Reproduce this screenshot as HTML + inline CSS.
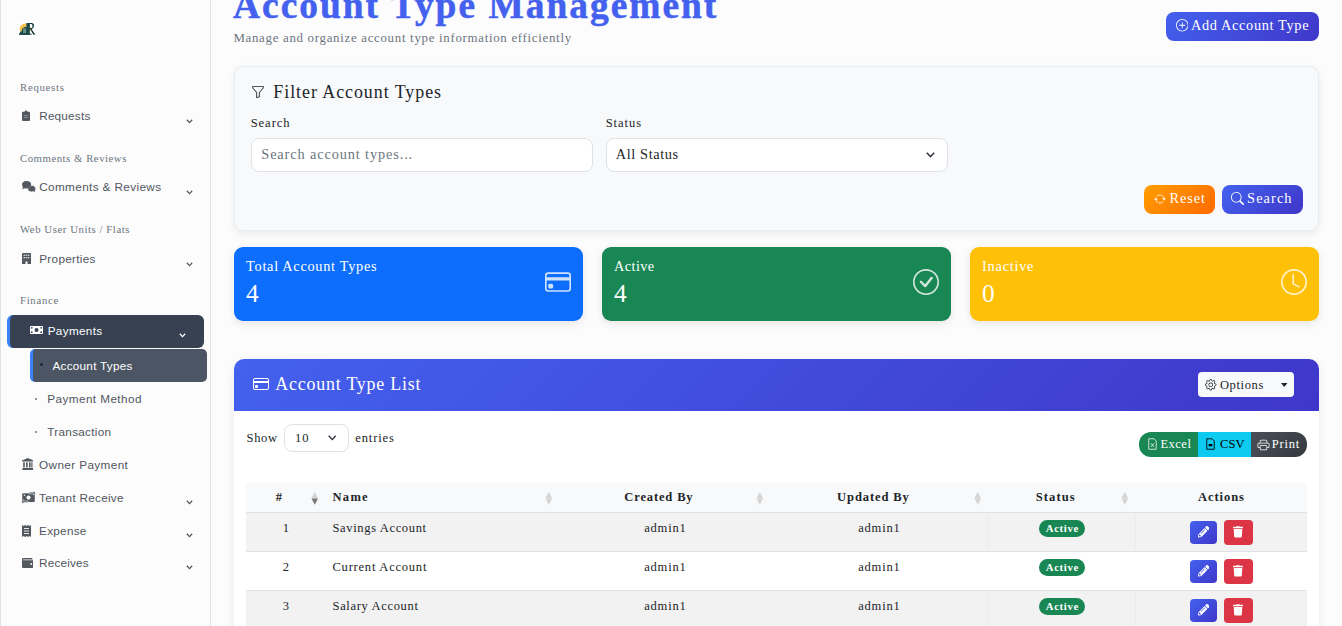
<!DOCTYPE html>
<html><head><meta charset="utf-8"><title>Account Type Management</title>
<style>
html,body{margin:0;padding:0;}
body{width:1342px;height:626px;overflow:hidden;position:relative;background:#fcfcfd;font-family:"Liberation Serif",serif;}
.b{position:absolute;display:block;}
.t{position:absolute;white-space:nowrap;}
</style></head><body>
<div class="b" style="left:0px;top:0px;width:211px;height:626px;background:#fcfcfd;border-left:1px solid #dee2e6;border-right:1px solid #dee2e6;box-sizing:border-box;"></div>
<div class="b" style="left:18px;top:21px;width:18px;height:16px;background:#fff;"></div>
<svg class="b" style="left:18px;top:21px;" width="18" height="16" viewBox="18 21 18 16"><circle cx="25.2" cy="29.2" r="5.6" fill="#f6c350"/><path d="M19 34.8 L20.3 31.8 L21.6 31.2 L22.3 28.6 L24.6 27.1 L26.4 27.1 L26.4 22.9 L29.8 22.9 L29.8 34.8 Z" fill="#1d4a4c"/><rect x="23.1" y="28.4" width="2.9" height="4.6" fill="#6f8f86"/><path d="M29.5 22.9 L31.6 22.9 Q34 23 34 25.8 Q34 28.3 31.6 28.9 L35.3 34.8 L33.4 34.8 L30.2 29.3 L29.5 29.3 Z M29.8 24.1 L29.8 28 L31.3 28 Q32.5 27.8 32.5 25.9 Q32.4 24.2 31.3 24.1 Z" fill="#14393a"/><rect x="19" y="33.6" width="12.5" height="1.2" fill="#1d4a4c"/></svg>
<div class="t" style="top:80px;font:400 10.75px/14px 'Liberation Serif', serif;letter-spacing:0.726px;color:#6c757d;left:20.0px;">Requests</div>
<div class="t" style="top:151px;font:400 10.75px/14px 'Liberation Serif', serif;letter-spacing:0.528px;color:#6c757d;left:20.0px;">Comments &amp; Reviews</div>
<div class="t" style="top:222px;font:400 10.75px/14px 'Liberation Serif', serif;letter-spacing:0.561px;color:#6c757d;left:20.0px;">Web User Units / Flats</div>
<div class="t" style="top:293px;font:400 10.75px/14px 'Liberation Serif', serif;letter-spacing:0.693px;color:#6c757d;left:20.0px;">Finance</div>
<div class="t" style="top:108px;font:400 11.76px/15px 'Liberation Sans', sans-serif;letter-spacing:0.207px;color:#51565d;left:39.2px;">Requests</div>
<svg class="b" style="left:185.5px;top:118.60000000000001px;" width="7" height="5" viewBox="0 0 7 5"><path d="M0.8 0.8 L3.5 3.6 L6.2 0.8" fill="none" stroke="#53585e" stroke-width="1.3"/></svg>
<div class="t" style="top:179px;font:400 11.76px/15px 'Liberation Sans', sans-serif;letter-spacing:0.372px;color:#51565d;left:39.2px;">Comments &amp; Reviews</div>
<svg class="b" style="left:185.5px;top:189.5px;" width="7" height="5" viewBox="0 0 7 5"><path d="M0.8 0.8 L3.5 3.6 L6.2 0.8" fill="none" stroke="#53585e" stroke-width="1.3"/></svg>
<div class="t" style="top:251px;font:400 11.76px/15px 'Liberation Sans', sans-serif;letter-spacing:0.301px;color:#51565d;left:39.2px;">Properties</div>
<svg class="b" style="left:185.5px;top:261.59999999999997px;" width="7" height="5" viewBox="0 0 7 5"><path d="M0.8 0.8 L3.5 3.6 L6.2 0.8" fill="none" stroke="#53585e" stroke-width="1.3"/></svg>
<svg class="b" style="left:22px;top:110px;" width="8" height="11" viewBox="0 0 8 11"><path d="M1 1.8 H2.6 A1.4 1.4 0 0 1 5.4 1.8 H7 A1 1 0 0 1 8 2.8 V10 A1 1 0 0 1 7 11 H1 A1 1 0 0 1 0 10 V2.8 A1 1 0 0 1 1 1.8Z" fill="#53585e"/><rect x="1.8" y="5" width="4.4" height="0.8" fill="#9aa1ab"/><rect x="1.8" y="7" width="4.4" height="0.8" fill="#9aa1ab"/></svg>
<svg class="b" style="left:18px;top:176px;" width="22" height="20" viewBox="18 176 22 20"><path d="M31.8 185.2 A4.5 3.6 0 0 1 35.8 188.6 A4.5 3.6 0 0 1 35.1 190.6 L36 192.6 L33.3 191.7 A4.5 3.6 0 0 1 27.4 188.9 Z" fill="#53585e" stroke="#fcfcfd" stroke-width="0.8"/><ellipse cx="26.6" cy="184.7" rx="4.5" ry="3.7" fill="#53585e"/><path d="M23.3 186.8 L22 189.3 L25.4 188.1Z" fill="#53585e"/></svg>
<svg class="b" style="left:21.5px;top:253px;" width="9" height="11" viewBox="0 0 9 11"><path d="M0 0.8 A0.8 0.8 0 0 1 0.8 0 H8.2 A0.8 0.8 0 0 1 9 0.8 V11 H5.5 V8.5 H3.5 V11 H0Z" fill="#53585e"/><rect x="1.5" y="1.6" width="1.6" height="1.3" fill="#d1d5db"/><rect x="3.7" y="1.6" width="1.6" height="1.3" fill="#d1d5db"/><rect x="5.9" y="1.6" width="1.6" height="1.3" fill="#d1d5db"/><rect x="1.5" y="4" width="1.6" height="1.3" fill="#d1d5db"/><rect x="3.7" y="4" width="1.6" height="1.3" fill="#d1d5db"/><rect x="5.9" y="4" width="1.6" height="1.3" fill="#d1d5db"/></svg>
<div class="b" style="left:7px;top:315px;width:197px;height:32.5px;background:#374151;border-left:3px solid #3b82f6;border-radius:6px;box-sizing:border-box;"></div>
<svg class="b" style="left:30px;top:326px;" width="13" height="8" viewBox="0 0 13 8"><rect x="0" y="0" width="13" height="8" rx="0.8" fill="#fff"/><circle cx="6.5" cy="4" r="2" fill="#374151"/><circle cx="1.8" cy="1.8" r="0.9" fill="#374151"/><circle cx="11.2" cy="6.2" r="0.9" fill="#374151"/><circle cx="11.2" cy="1.8" r="0.9" fill="#374151"/><circle cx="1.8" cy="6.2" r="0.9" fill="#374151"/></svg>
<div class="t" style="top:323px;font:400 11.76px/15px 'Liberation Sans', sans-serif;letter-spacing:0.323px;color:#ffffff;left:47.7px;">Payments</div>
<svg class="b" style="left:178.5px;top:333.3px;" width="7" height="5" viewBox="0 0 7 5"><path d="M0.8 0.8 L3.5 3.6 L6.2 0.8" fill="none" stroke="#ffffff" stroke-width="1.3"/></svg>
<div class="b" style="left:30px;top:349.2px;width:177px;height:32.5px;background:#4b5563;border-left:3px solid #3b82f6;border-radius:5px;box-sizing:border-box;"></div>
<div class="b" style="left:40px;top:363px;width:3px;height:3px;background:#1f2937;border-radius:50%;"></div>
<div class="t" style="top:358px;font:400 11.76px/15px 'Liberation Sans', sans-serif;letter-spacing:0.263px;color:#ffffff;left:52.4px;">Account Types</div>
<div class="b" style="left:35px;top:397.8px;width:2px;height:2px;background:#6b7280;border-radius:50%;"></div>
<div class="t" style="top:391px;font:400 11.76px/15px 'Liberation Sans', sans-serif;letter-spacing:0.408px;color:#51565d;left:47.3px;">Payment Method</div>
<div class="b" style="left:35px;top:430.6px;width:2px;height:2px;background:#6b7280;border-radius:50%;"></div>
<div class="t" style="top:424px;font:400 11.76px/15px 'Liberation Sans', sans-serif;letter-spacing:0.279px;color:#51565d;left:47.3px;">Transaction</div>
<div class="t" style="top:457px;font:400 11.76px/15px 'Liberation Sans', sans-serif;letter-spacing:0.373px;color:#51565d;left:39.1px;">Owner Payment</div>
<div class="t" style="top:490px;font:400 11.76px/15px 'Liberation Sans', sans-serif;letter-spacing:0.26px;color:#51565d;left:39.1px;">Tenant Receive</div>
<svg class="b" style="left:185.5px;top:500px;" width="7" height="5" viewBox="0 0 7 5"><path d="M0.8 0.8 L3.5 3.6 L6.2 0.8" fill="none" stroke="#53585e" stroke-width="1.3"/></svg>
<div class="t" style="top:523px;font:400 11.76px/15px 'Liberation Sans', sans-serif;letter-spacing:0.253px;color:#51565d;left:39.1px;">Expense</div>
<svg class="b" style="left:185.5px;top:533.1px;" width="7" height="5" viewBox="0 0 7 5"><path d="M0.8 0.8 L3.5 3.6 L6.2 0.8" fill="none" stroke="#53585e" stroke-width="1.3"/></svg>
<div class="t" style="top:555px;font:400 11.76px/15px 'Liberation Sans', sans-serif;letter-spacing:0.165px;color:#51565d;left:39.1px;">Receives</div>
<svg class="b" style="left:185.5px;top:565.1px;" width="7" height="5" viewBox="0 0 7 5"><path d="M0.8 0.8 L3.5 3.6 L6.2 0.8" fill="none" stroke="#53585e" stroke-width="1.3"/></svg>
<svg class="b" style="left:21.8px;top:458px;" width="11.5" height="12" viewBox="0 0 11.5 12"><path d="M5.75 0 L11.5 2.6 V3.6 H0 V2.6Z" fill="#53585e"/><rect x="1.2" y="4.3" width="1.6" height="5.2" fill="#53585e"/><rect x="4.1" y="4.3" width="1.6" height="5.2" fill="#53585e"/><rect x="7" y="4.3" width="1.6" height="5.2" fill="#53585e"/><rect x="9.3" y="4.3" width="1.2" height="5.2" fill="#53585e"/><rect x="0.4" y="10" width="10.7" height="2" fill="#53585e"/></svg>
<svg class="b" style="left:18px;top:488px;" width="22" height="20" viewBox="18 488 22 20"><rect x="22.2" y="493.3" width="12.6" height="8.6" rx="1.2" fill="#53585e"/><circle cx="28.5" cy="497.6" r="2.1" fill="#fcfcfd"/><circle cx="24.4" cy="495.3" r="0.7" fill="#fcfcfd"/><path d="M29 492.2 H33.5 V490.8 L35.6 493 L33.5 495.2 V493.8 H29Z" fill="#53585e" stroke="#fcfcfd" stroke-width="0.5"/><path d="M28 501 H23.6 V499.6 L21.5 501.8 L23.6 504 V502.6 H28Z" fill="#53585e" stroke="#fcfcfd" stroke-width="0.5"/></svg>
<svg class="b" style="left:21.5px;top:525px;" width="9" height="12" viewBox="0 0 9 12"><path d="M0 0 L1.5 1 L3 0 L4.5 1 L6 0 L7.5 1 L9 0 V12 L7.5 11 L6 12 L4.5 11 L3 12 L1.5 11 L0 12Z" fill="#53585e"/><rect x="2" y="3" width="5" height="1" fill="#e5e7eb"/><rect x="2" y="5.5" width="5" height="1" fill="#e5e7eb"/><rect x="2" y="8" width="5" height="1" fill="#e5e7eb"/></svg>
<svg class="b" style="left:21.5px;top:557.5px;" width="11.5" height="10" viewBox="0 0 11.5 10"><path d="M1.2 0 H9.5 A1 1 0 0 1 10.5 1 V1.5 H1.2 A0.6 0.6 0 0 0 1.2 2.2 H10.5 A1 1 0 0 1 11.5 3.2 V8.8 A1.2 1.2 0 0 1 10.3 10 H1.2 A1.2 1.2 0 0 1 0 8.8 V1.2 A1.2 1.2 0 0 1 1.2 0Z" fill="#53585e"/><circle cx="9.2" cy="6" r="0.9" fill="#fcfcfc"/></svg>
<div class="t" style="top:-19px;font:700 37.44px/49px 'Liberation Serif', serif;letter-spacing:1.999px;color:#4361ee;left:233.0px;-webkit-text-stroke:0.5px #4361ee;">Account Type Management</div>
<div class="t" style="top:30px;font:400 12.88px/17px 'Liberation Serif', serif;letter-spacing:0.702px;color:#6c757d;left:233.4px;">Manage and organize account type information efficiently</div>
<div class="b" style="left:1166px;top:12px;width:153px;height:29px;background:linear-gradient(135deg,#4361ee,#3f37c9);border-radius:8px;"></div>
<svg class="b" style="left:1175.5px;top:19.3px;" width="12.5" height="12.5" viewBox="0 0 16 16"><path fill="#fff" d="M8 15A7 7 0 1 1 8 1a7 7 0 0 1 0 14m0 1A8 8 0 1 0 8 0a8 8 0 0 0 0 16"/><path fill="#fff" d="M8 4a.5.5 0 0 1 .5.5v3h3a.5.5 0 0 1 0 1h-3v3a.5.5 0 0 1-1 0v-3h-3a.5.5 0 0 1 0-1h3v-3A.5.5 0 0 1 8 4"/></svg>
<div class="t" style="top:16px;font:400 14.34px/19px 'Liberation Serif', serif;letter-spacing:0.648px;color:#ffffff;left:1191.0px;">Add Account Type</div>
<div class="b" style="left:234px;top:66px;width:1085px;height:164.5px;background:#f8f9fa;border:1px solid #e9ecef;border-radius:9px;box-sizing:border-box;box-shadow:0 3px 8px rgba(0,0,0,.07);"></div>
<svg class="b" style="left:251px;top:84.5px;" width="14" height="14" viewBox="0 0 16 16"><path fill="#212529" d="M1.5 1.5A.5.5 0 0 1 2 1h12a.5.5 0 0 1 .5.5v2a.5.5 0 0 1-.128.334L10 8.692V13.5a.5.5 0 0 1-.342.474l-3 1A.5.5 0 0 1 6 14.5V8.692L1.628 3.834A.5.5 0 0 1 1.5 3.5zm1 .5v1.308l4.372 4.858A.5.5 0 0 1 7 8.5v5.306l2-.666V8.5a.5.5 0 0 1 .128-.334L13.5 3.308V2z"/></svg>
<div class="t" style="top:81px;font:400 17.92px/23px 'Liberation Serif', serif;letter-spacing:0.956px;color:#212529;left:273.3px;">Filter Account Types</div>
<div class="t" style="top:115px;font:400 12.54px/16px 'Liberation Serif', serif;letter-spacing:0.95px;color:#212529;left:250.7px;">Search</div>
<div class="t" style="top:115px;font:400 12.54px/16px 'Liberation Serif', serif;letter-spacing:0.942px;color:#212529;left:605.7px;">Status</div>
<div class="b" style="left:251px;top:138px;width:342px;height:33.5px;background:#fff;border:1px solid #dee2e6;border-radius:8px;box-sizing:border-box;"></div>
<div class="t" style="top:145px;font:400 14.34px/19px 'Liberation Serif', serif;letter-spacing:0.872px;color:#6c757d;left:261.3px;">Search account types...</div>
<div class="b" style="left:606px;top:138px;width:342px;height:33.5px;background:#fff;border:1px solid #dee2e6;border-radius:8px;box-sizing:border-box;"></div>
<div class="t" style="top:145px;font:400 14.34px/19px 'Liberation Serif', serif;letter-spacing:0.603px;color:#212529;left:615.8px;">All Status</div>
<svg class="b" style="left:926px;top:152px;" width="9" height="6" viewBox="0 0 9 6"><path d="M0.8 0.8 L4.5 4.6 L8.2 0.8" fill="none" stroke="#343a40" stroke-width="1.5"/></svg>
<div class="b" style="left:1144px;top:185px;width:71px;height:29px;background:linear-gradient(135deg,#ff9e00,#ff6a00);border-radius:8px;"></div>
<svg class="b" style="left:1154px;top:192.5px;" width="12" height="12" viewBox="0 0 16 16"><path fill="#fff" d="M11.534 7h3.932a.25.25 0 0 1 .192.41l-1.966 2.36a.25.25 0 0 1-.384 0l-1.966-2.36a.25.25 0 0 1 .192-.41m-11 2h3.932a.25.25 0 0 0 .192-.41L2.692 6.23a.25.25 0 0 0-.384 0L.342 8.59A.25.25 0 0 0 .534 9"/><path fill="#fff" d="M8 3c-1.552 0-2.94.707-3.857 1.818a.5.5 0 1 1-.771-.636A6.002 6.002 0 0 1 13.917 7H12.9A5 5 0 0 0 8 3M3.1 9a5.002 5.002 0 0 0 8.757 2.182.5.5 0 1 1 .771.636A6.002 6.002 0 0 1 2.083 9z"/></svg>
<div class="t" style="top:189px;font:400 14.34px/19px 'Liberation Serif', serif;letter-spacing:0.928px;color:#ffffff;left:1169.4px;">Reset</div>
<div class="b" style="left:1222px;top:185px;width:80.5px;height:29px;background:linear-gradient(135deg,#4361ee,#3f37c9);border-radius:8px;"></div>
<svg class="b" style="left:1231px;top:192px;" width="13" height="13" viewBox="0 0 16 16"><path fill="#fff" d="M11.742 10.344a6.5 6.5 0 1 0-1.397 1.398h-.001q.044.06.098.115l3.85 3.85a1 1 0 0 0 1.415-1.414l-3.85-3.85a1 1 0 0 0-.115-.1zM12 6.5a5.5 5.5 0 1 1-11 0 5.5 5.5 0 0 1 11 0"/></svg>
<div class="t" style="top:189px;font:400 14.34px/19px 'Liberation Serif', serif;letter-spacing:1.082px;color:#ffffff;left:1247.1px;">Search</div>
<div class="b" style="left:234px;top:247px;width:349px;height:74px;background:#0d6efd;border-radius:9px;box-shadow:0 3px 8px rgba(0,0,0,.09);"></div>
<div class="t" style="top:257px;font:400 14.34px/19px 'Liberation Serif', serif;letter-spacing:0.699px;color:#ffffff;left:246.1px;">Total Account Types</div>
<div class="t" style="top:277px;font:400 25.44px/33px 'Liberation Serif', serif;letter-spacing:2.55px;color:#ffffff;left:246.1px;">4</div>
<svg class="b" style="left:544.5px;top:269px;opacity:.8;" width="26" height="26" viewBox="0 0 16 16"><path fill="#fff" d="M0 4a2 2 0 0 1 2-2h12a2 2 0 0 1 2 2v8a2 2 0 0 1-2 2H2a2 2 0 0 1-2-2zm2-1a1 1 0 0 0-1 1v1h14V4a1 1 0 0 0-1-1zm13 4H1v5a1 1 0 0 0 1 1h12a1 1 0 0 0 1-1z"/><path fill="#fff" d="M2 10a1 1 0 0 1 1-1h1a1 1 0 0 1 1 1v1a1 1 0 0 1-1 1H3a1 1 0 0 1-1-1z"/></svg>
<div class="b" style="left:602px;top:247px;width:349px;height:74px;background:#198754;border-radius:9px;box-shadow:0 3px 8px rgba(0,0,0,.09);"></div>
<div class="t" style="top:257px;font:400 14.34px/19px 'Liberation Serif', serif;letter-spacing:0.372px;color:#ffffff;left:614.1px;">Active</div>
<div class="t" style="top:277px;font:400 25.44px/33px 'Liberation Serif', serif;letter-spacing:2.55px;color:#ffffff;left:614.1px;">4</div>
<svg class="b" style="left:912.5px;top:269px;opacity:.8;" width="26" height="26" viewBox="0 0 16 16"><path fill="#fff" d="M8 15A7 7 0 1 1 8 1a7 7 0 0 1 0 14m0 1A8 8 0 1 0 8 0a8 8 0 0 0 0 16"/><path fill="#fff" d="m10.97 4.97-.02.022-3.473 4.425-2.093-2.094a.75.75 0 0 0-1.06 1.06L6.97 11.03a.75.75 0 0 0 1.079-.02l3.992-4.99a.75.75 0 0 0-1.071-1.05"/></svg>
<div class="b" style="left:970px;top:247px;width:349px;height:74px;background:#ffc107;border-radius:9px;box-shadow:0 3px 8px rgba(0,0,0,.09);"></div>
<div class="t" style="top:257px;font:400 14.34px/19px 'Liberation Serif', serif;letter-spacing:0.746px;color:#ffffff;left:982.1px;">Inactive</div>
<div class="t" style="top:277px;font:400 25.44px/33px 'Liberation Serif', serif;letter-spacing:2.55px;color:#ffffff;left:982.1px;">0</div>
<svg class="b" style="left:1280.5px;top:269px;opacity:.8;" width="26" height="26" viewBox="0 0 16 16"><path fill="#fff" d="M8 3.5a.5.5 0 0 0-1 0V9a.5.5 0 0 0 .252.434l3.5 2a.5.5 0 0 0 .496-.868L8 8.71z"/><path fill="#fff" d="M8 16A8 8 0 1 0 8 0a8 8 0 0 0 0 16m7-8A7 7 0 1 1 1 8a7 7 0 0 1 14 0"/></svg>
<div class="b" style="left:234px;top:359px;width:1085px;height:300px;background:#fff;border-radius:10px;box-shadow:0 3px 10px rgba(0,0,0,.08);"></div>
<div class="b" style="left:234px;top:359px;width:1085px;height:51.5px;background:linear-gradient(135deg,#4361ee,#3f37c9);border-radius:10px 10px 0 0;"></div>
<svg class="b" style="left:252.8px;top:376px;" width="16" height="16" viewBox="0 0 16 16"><path fill="#fff" d="M0 4a2 2 0 0 1 2-2h12a2 2 0 0 1 2 2v8a2 2 0 0 1-2 2H2a2 2 0 0 1-2-2zm2-1a1 1 0 0 0-1 1v1h14V4a1 1 0 0 0-1-1zm13 4H1v5a1 1 0 0 0 1 1h12a1 1 0 0 0 1-1z"/><path fill="#fff" d="M2 10a1 1 0 0 1 1-1h1a1 1 0 0 1 1 1v1a1 1 0 0 1-1 1H3a1 1 0 0 1-1-1z"/></svg>
<div class="t" style="top:373px;font:400 17.92px/23px 'Liberation Serif', serif;letter-spacing:0.784px;color:#ffffff;left:275.3px;">Account Type List</div>
<div class="b" style="left:1198px;top:372px;width:96px;height:25px;background:#f8f9fa;border-radius:4px;"></div>
<svg class="b" style="left:1205px;top:379px;" width="11.5" height="11.5" viewBox="0 0 16 16"><path fill="#212529" d="M8 4.754a3.246 3.246 0 1 0 0 6.492 3.246 3.246 0 0 0 0-6.492M5.754 8a2.246 2.246 0 1 1 4.492 0 2.246 2.246 0 0 1-4.492 0"/><path fill="#212529" d="M9.796 1.343c-.527-1.79-3.065-1.79-3.592 0l-.094.319a.873.873 0 0 1-1.255.52l-.292-.16c-1.64-.892-3.433.902-2.54 2.541l.159.292a.873.873 0 0 1-.52 1.255l-.319.094c-1.79.527-1.79 3.065 0 3.592l.319.094a.873.873 0 0 1 .52 1.255l-.16.292c-.892 1.64.901 3.434 2.541 2.54l.292-.159a.873.873 0 0 1 1.255.52l.094.319c.527 1.79 3.065 1.79 3.592 0l.094-.319a.873.873 0 0 1 1.255-.52l.292.16c1.64.893 3.434-.902 2.54-2.541l-.159-.292a.873.873 0 0 1 .52-1.255l.319-.094c1.79-.527 1.79-3.065 0-3.592l-.319-.094a.873.873 0 0 1-.52-1.255l.16-.292c.893-1.64-.902-3.433-2.541-2.54l-.292.159a.873.873 0 0 1-1.255-.52zm-2.633.283c.246-.835 1.428-.835 1.674 0l.094.319a1.873 1.873 0 0 0 2.693 1.115l.291-.16c.764-.415 1.6.42 1.184 1.185l-.159.292a1.873 1.873 0 0 0 1.116 2.692l.318.094c.835.246.835 1.428 0 1.674l-.319.094a1.873 1.873 0 0 0-1.115 2.693l.16.291c.415.764-.42 1.6-1.185 1.184l-.291-.159a1.873 1.873 0 0 0-2.693 1.116l-.094.318c-.246.835-1.428.835-1.674 0l-.094-.319a1.873 1.873 0 0 0-2.692-1.115l-.292.16c-.764.415-1.6-.42-1.184-1.185l.159-.291A1.873 1.873 0 0 0 1.945 8.93l-.319-.094c-.835-.246-.835-1.428 0-1.674l.319-.094A1.873 1.873 0 0 0 3.06 4.377l-.16-.292c-.415-.764.42-1.6 1.185-1.184l.292.159a1.873 1.873 0 0 0 2.692-1.115z"/></svg>
<div class="t" style="top:377px;font:400 12.54px/16px 'Liberation Serif', serif;letter-spacing:0.632px;color:#212529;left:1219.9px;">Options</div>
<svg class="b" style="left:1281px;top:382.5px;" width="6.5" height="4" viewBox="0 0 6.5 4"><path d="M0 0 H6.5 L3.25 4Z" fill="#212529"/></svg>
<div class="t" style="top:430px;font:400 12.54px/16px 'Liberation Serif', serif;letter-spacing:0.661px;color:#212529;left:246.5px;">Show</div>
<div class="b" style="left:284px;top:424px;width:64.5px;height:27.8px;background:#fff;border:1px solid #dee2e6;border-radius:8px;box-sizing:border-box;"></div>
<div class="t" style="top:430px;font:400 12.54px/16px 'Liberation Serif', serif;letter-spacing:0.856px;color:#212529;left:295.1px;">10</div>
<svg class="b" style="left:327.8px;top:435px;" width="8.5" height="5.5" viewBox="0 0 8.5 5.5"><path d="M0.7 0.7 L4.25 4.4 L7.8 0.7" fill="none" stroke="#343a40" stroke-width="1.4"/></svg>
<div class="t" style="top:430px;font:400 12.54px/16px 'Liberation Serif', serif;letter-spacing:0.89px;color:#212529;left:355.2px;">entries</div>
<div class="b" style="left:1139px;top:432px;width:59px;height:25px;background:#198754;border-radius:12px 0 0 12px;"></div>
<div class="b" style="left:1198px;top:432px;width:53px;height:25px;background:#0dcaf0;"></div>
<div class="b" style="left:1251px;top:432px;width:56px;height:25px;background:linear-gradient(135deg,#495057,#343a40);border-radius:0 12px 12px 0;"></div>
<svg class="b" style="left:1147.5px;top:437.8px;" width="9" height="12" viewBox="0 0 12 16"><path fill="none" stroke="#fff" stroke-width="1" d="M1 1 H8 L11 4 V15 H1Z"/><path fill="none" stroke="#fff" stroke-width="1" d="M4 7 L8 12 M8 7 L4 12"/></svg>
<div class="t" style="top:436px;font:400 12.54px/16px 'Liberation Serif', serif;letter-spacing:0.486px;color:#ffffff;left:1160.4px;">Excel</div>
<svg class="b" style="left:1206px;top:437.8px;" width="9" height="12" viewBox="0 0 12 16"><path fill="none" stroke="#000" stroke-width="1.2" d="M1 1 H8 L11 4 V15 H1Z"/><rect x="3.5" y="8" width="5" height="3" fill="#000"/></svg>
<div class="t" style="top:436px;font:400 12.54px/16px 'Liberation Serif', serif;letter-spacing:-0.021px;color:#000000;left:1220.1px;">CSV</div>
<svg class="b" style="left:1257px;top:438.5px;" width="13" height="12" viewBox="0 0 16 16"><path fill="#fff" d="M2.5 8a.5.5 0 1 0 0-1 .5.5 0 0 0 0 1"/><path fill="#fff" d="M5 1a2 2 0 0 0-2 2v2H2a2 2 0 0 0-2 2v3a2 2 0 0 0 2 2h1v1a2 2 0 0 0 2 2h6a2 2 0 0 0 2-2v-1h1a2 2 0 0 0 2-2V7a2 2 0 0 0-2-2h-1V3a2 2 0 0 0-2-2zM4 3a1 1 0 0 1 1-1h6a1 1 0 0 1 1 1v2H4zm1 5a2 2 0 0 0-2 2v1H2a1 1 0 0 1-1-1V7a1 1 0 0 1 1-1h12a1 1 0 0 1 1 1v3a1 1 0 0 1-1 1h-1v-1a2 2 0 0 0-2-2zm7 2v3a1 1 0 0 1-1 1H5a1 1 0 0 1-1-1v-3a1 1 0 0 1 1-1h6a1 1 0 0 1 1 1"/></svg>
<div class="t" style="top:436px;font:400 12.54px/16px 'Liberation Serif', serif;letter-spacing:0.76px;color:#ffffff;left:1271.8px;">Print</div>
<div class="b" style="left:246px;top:483px;width:1061px;height:29px;background:#f8f9fa;"></div>
<div class="b" style="left:246px;top:512px;width:1061px;height:1px;background:#dee2e6;"></div>
<div class="t" style="top:489px;font:700 12.54px/16px 'Liberation Serif', serif;letter-spacing:3.115px;color:#212529;left:275.87px;">#</div>
<div class="t" style="top:489px;font:700 12.54px/16px 'Liberation Serif', serif;letter-spacing:1.283px;color:#212529;left:332.5px;">Name</div>
<div class="t" style="top:489px;font:700 12.54px/16px 'Liberation Serif', serif;letter-spacing:0.848px;color:#212529;left:624.33px;">Created By</div>
<div class="t" style="top:489px;font:700 12.54px/16px 'Liberation Serif', serif;letter-spacing:0.893px;color:#212529;left:837.1px;">Updated By</div>
<div class="t" style="top:489px;font:700 12.54px/16px 'Liberation Serif', serif;letter-spacing:1.115px;color:#212529;left:1035.69px;">Status</div>
<div class="t" style="top:489px;font:700 12.54px/16px 'Liberation Serif', serif;letter-spacing:0.921px;color:#212529;left:1198.03px;">Actions</div>
<svg class="b" style="left:311.2px;top:491.8px;" width="7.5" height="13" viewBox="0 0 7.5 13"><path d="M3.75 0 L7 6.3 H0.5Z" fill="#d4d4d4"/><path d="M3.75 12.8 L7 6.5 H0.5Z" fill="#777777"/></svg>
<svg class="b" style="left:545.2px;top:491.8px;" width="7.5" height="13" viewBox="0 0 7.5 13"><path d="M3.75 0 L7 6.3 H0.5Z" fill="#d4d4d4"/><path d="M3.75 12.8 L7 6.5 H0.5Z" fill="#d4d4d4"/></svg>
<svg class="b" style="left:756px;top:491.8px;" width="7.5" height="13" viewBox="0 0 7.5 13"><path d="M3.75 0 L7 6.3 H0.5Z" fill="#d4d4d4"/><path d="M3.75 12.8 L7 6.5 H0.5Z" fill="#d4d4d4"/></svg>
<svg class="b" style="left:974px;top:491.8px;" width="7.5" height="13" viewBox="0 0 7.5 13"><path d="M3.75 0 L7 6.3 H0.5Z" fill="#d4d4d4"/><path d="M3.75 12.8 L7 6.5 H0.5Z" fill="#d4d4d4"/></svg>
<svg class="b" style="left:1121px;top:491.8px;" width="7.5" height="13" viewBox="0 0 7.5 13"><path d="M3.75 0 L7 6.3 H0.5Z" fill="#d4d4d4"/><path d="M3.75 12.8 L7 6.5 H0.5Z" fill="#d4d4d4"/></svg>
<div class="b" style="left:246px;top:513.0px;width:1061px;height:38.5px;background:#f2f2f2;"></div>
<div class="b" style="left:246px;top:551.0px;width:1061px;height:1px;background:#dee2e6;"></div>
<div class="b" style="left:988px;top:513.5px;width:1px;height:38px;background:#ececec;"></div>
<div class="b" style="left:1135px;top:513.5px;width:1px;height:38px;background:#ececec;"></div>
<div class="t" style="top:520px;font:400 12.54px/16px 'Liberation Serif', serif;letter-spacing:0.856px;color:#212529;left:282.87px;">1</div>
<div class="t" style="top:520px;font:400 12.54px/16px 'Liberation Serif', serif;letter-spacing:0.641px;color:#212529;left:332.5px;">Savings Account</div>
<div class="t" style="top:520px;font:400 12.54px/16px 'Liberation Serif', serif;letter-spacing:0.796px;color:#212529;left:644.2px;">admin1</div>
<div class="t" style="top:520px;font:400 12.54px/16px 'Liberation Serif', serif;letter-spacing:0.796px;color:#212529;left:858.2px;">admin1</div>
<div class="b" style="left:1039px;top:520px;width:46px;height:17px;background:#198754;border-radius:9px;"></div>
<div class="t" style="top:521px;font:700 10.75px/14px 'Liberation Serif', serif;letter-spacing:0.636px;color:#ffffff;left:1045.79px;">Active</div>
<div class="b" style="left:1190px;top:521px;width:27px;height:23px;background:linear-gradient(135deg,#4361ee,#3f37c9);border-radius:4px;"></div>
<svg class="b" style="left:1197.6px;top:526px;" width="11.5" height="11.5" viewBox="0 0 512 512"><path fill="#fff" d="M497.9 142.1l-46.1 46.1c-4.7 4.7-12.3 4.7-17 0l-111-111c-4.7-4.7-4.7-12.3 0-17l46.1-46.1c18.7-18.7 49.1-18.7 67.9 0l60.1 60.1c18.8 18.7 18.8 49.1 0 67.9zM284.2 99.8L21.6 362.4.4 483.9c-2.9 16.4 11.4 30.6 27.8 27.8l121.5-21.3 262.6-262.6c4.7-4.7 4.7-12.3 0-17l-111-111c-4.8-4.7-12.4-4.7-17.1 0zM124.1 339.9c-5.5-5.5-5.5-14.3 0-19.8l154-154c5.5-5.5 14.3-5.5 19.8 0s5.5 14.3 0 19.8l-154 154c-5.5 5.5-14.3 5.5-19.8 0zM88 424h48v36.3l-64.5 11.3-31.1-31.1L51.7 376H88v48z"/></svg>
<div class="b" style="left:1224px;top:520px;width:29px;height:25px;background:#dc3545;border-radius:4px;"></div>
<svg class="b" style="left:1232.8px;top:526px;" width="10" height="11.7" viewBox="0 0 448 512"><path fill="#fff" d="M432 32H312l-9.4-18.7A24 24 0 0 0 281.1 0H166.8a23.72 23.72 0 0 0-21.4 13.3L136 32H16A16 16 0 0 0 0 48v32a16 16 0 0 0 16 16h416a16 16 0 0 0 16-16V48a16 16 0 0 0-16-16zM53.2 467a48 48 0 0 0 47.9 45h245.8a48 48 0 0 0 47.9-45L416 128H32z"/></svg>
<div class="b" style="left:246px;top:552.0px;width:1061px;height:38.5px;background:#ffffff;"></div>
<div class="b" style="left:246px;top:590.0px;width:1061px;height:1px;background:#dee2e6;"></div>
<div class="t" style="top:559px;font:400 12.54px/16px 'Liberation Serif', serif;letter-spacing:0.856px;color:#212529;left:282.87px;">2</div>
<div class="t" style="top:559px;font:400 12.54px/16px 'Liberation Serif', serif;letter-spacing:0.764px;color:#212529;left:332.5px;">Current Account</div>
<div class="t" style="top:559px;font:400 12.54px/16px 'Liberation Serif', serif;letter-spacing:0.796px;color:#212529;left:644.2px;">admin1</div>
<div class="t" style="top:559px;font:400 12.54px/16px 'Liberation Serif', serif;letter-spacing:0.796px;color:#212529;left:858.2px;">admin1</div>
<div class="b" style="left:1039px;top:559px;width:46px;height:17px;background:#198754;border-radius:9px;"></div>
<div class="t" style="top:560px;font:700 10.75px/14px 'Liberation Serif', serif;letter-spacing:0.636px;color:#ffffff;left:1045.79px;">Active</div>
<div class="b" style="left:1190px;top:560px;width:27px;height:23px;background:linear-gradient(135deg,#4361ee,#3f37c9);border-radius:4px;"></div>
<svg class="b" style="left:1197.6px;top:565px;" width="11.5" height="11.5" viewBox="0 0 512 512"><path fill="#fff" d="M497.9 142.1l-46.1 46.1c-4.7 4.7-12.3 4.7-17 0l-111-111c-4.7-4.7-4.7-12.3 0-17l46.1-46.1c18.7-18.7 49.1-18.7 67.9 0l60.1 60.1c18.8 18.7 18.8 49.1 0 67.9zM284.2 99.8L21.6 362.4.4 483.9c-2.9 16.4 11.4 30.6 27.8 27.8l121.5-21.3 262.6-262.6c4.7-4.7 4.7-12.3 0-17l-111-111c-4.8-4.7-12.4-4.7-17.1 0zM124.1 339.9c-5.5-5.5-5.5-14.3 0-19.8l154-154c5.5-5.5 14.3-5.5 19.8 0s5.5 14.3 0 19.8l-154 154c-5.5 5.5-14.3 5.5-19.8 0zM88 424h48v36.3l-64.5 11.3-31.1-31.1L51.7 376H88v48z"/></svg>
<div class="b" style="left:1224px;top:559px;width:29px;height:25px;background:#dc3545;border-radius:4px;"></div>
<svg class="b" style="left:1232.8px;top:565px;" width="10" height="11.7" viewBox="0 0 448 512"><path fill="#fff" d="M432 32H312l-9.4-18.7A24 24 0 0 0 281.1 0H166.8a23.72 23.72 0 0 0-21.4 13.3L136 32H16A16 16 0 0 0 0 48v32a16 16 0 0 0 16 16h416a16 16 0 0 0 16-16V48a16 16 0 0 0-16-16zM53.2 467a48 48 0 0 0 47.9 45h245.8a48 48 0 0 0 47.9-45L416 128H32z"/></svg>
<div class="b" style="left:246px;top:591.0px;width:1061px;height:38.5px;background:#f2f2f2;"></div>
<div class="b" style="left:246px;top:629.0px;width:1061px;height:1px;background:#dee2e6;"></div>
<div class="b" style="left:988px;top:591.5px;width:1px;height:38px;background:#ececec;"></div>
<div class="b" style="left:1135px;top:591.5px;width:1px;height:38px;background:#ececec;"></div>
<div class="t" style="top:598px;font:400 12.54px/16px 'Liberation Serif', serif;letter-spacing:0.856px;color:#212529;left:282.87px;">3</div>
<div class="t" style="top:598px;font:400 12.54px/16px 'Liberation Serif', serif;letter-spacing:0.657px;color:#212529;left:332.5px;">Salary Account</div>
<div class="t" style="top:598px;font:400 12.54px/16px 'Liberation Serif', serif;letter-spacing:0.796px;color:#212529;left:644.2px;">admin1</div>
<div class="t" style="top:598px;font:400 12.54px/16px 'Liberation Serif', serif;letter-spacing:0.796px;color:#212529;left:858.2px;">admin1</div>
<div class="b" style="left:1039px;top:598px;width:46px;height:17px;background:#198754;border-radius:9px;"></div>
<div class="t" style="top:599px;font:700 10.75px/14px 'Liberation Serif', serif;letter-spacing:0.636px;color:#ffffff;left:1045.79px;">Active</div>
<div class="b" style="left:1190px;top:599px;width:27px;height:23px;background:linear-gradient(135deg,#4361ee,#3f37c9);border-radius:4px;"></div>
<svg class="b" style="left:1197.6px;top:604px;" width="11.5" height="11.5" viewBox="0 0 512 512"><path fill="#fff" d="M497.9 142.1l-46.1 46.1c-4.7 4.7-12.3 4.7-17 0l-111-111c-4.7-4.7-4.7-12.3 0-17l46.1-46.1c18.7-18.7 49.1-18.7 67.9 0l60.1 60.1c18.8 18.7 18.8 49.1 0 67.9zM284.2 99.8L21.6 362.4.4 483.9c-2.9 16.4 11.4 30.6 27.8 27.8l121.5-21.3 262.6-262.6c4.7-4.7 4.7-12.3 0-17l-111-111c-4.8-4.7-12.4-4.7-17.1 0zM124.1 339.9c-5.5-5.5-5.5-14.3 0-19.8l154-154c5.5-5.5 14.3-5.5 19.8 0s5.5 14.3 0 19.8l-154 154c-5.5 5.5-14.3 5.5-19.8 0zM88 424h48v36.3l-64.5 11.3-31.1-31.1L51.7 376H88v48z"/></svg>
<div class="b" style="left:1224px;top:598px;width:29px;height:25px;background:#dc3545;border-radius:4px;"></div>
<svg class="b" style="left:1232.8px;top:604px;" width="10" height="11.7" viewBox="0 0 448 512"><path fill="#fff" d="M432 32H312l-9.4-18.7A24 24 0 0 0 281.1 0H166.8a23.72 23.72 0 0 0-21.4 13.3L136 32H16A16 16 0 0 0 0 48v32a16 16 0 0 0 16 16h416a16 16 0 0 0 16-16V48a16 16 0 0 0-16-16zM53.2 467a48 48 0 0 0 47.9 45h245.8a48 48 0 0 0 47.9-45L416 128H32z"/></svg>
</body></html>
